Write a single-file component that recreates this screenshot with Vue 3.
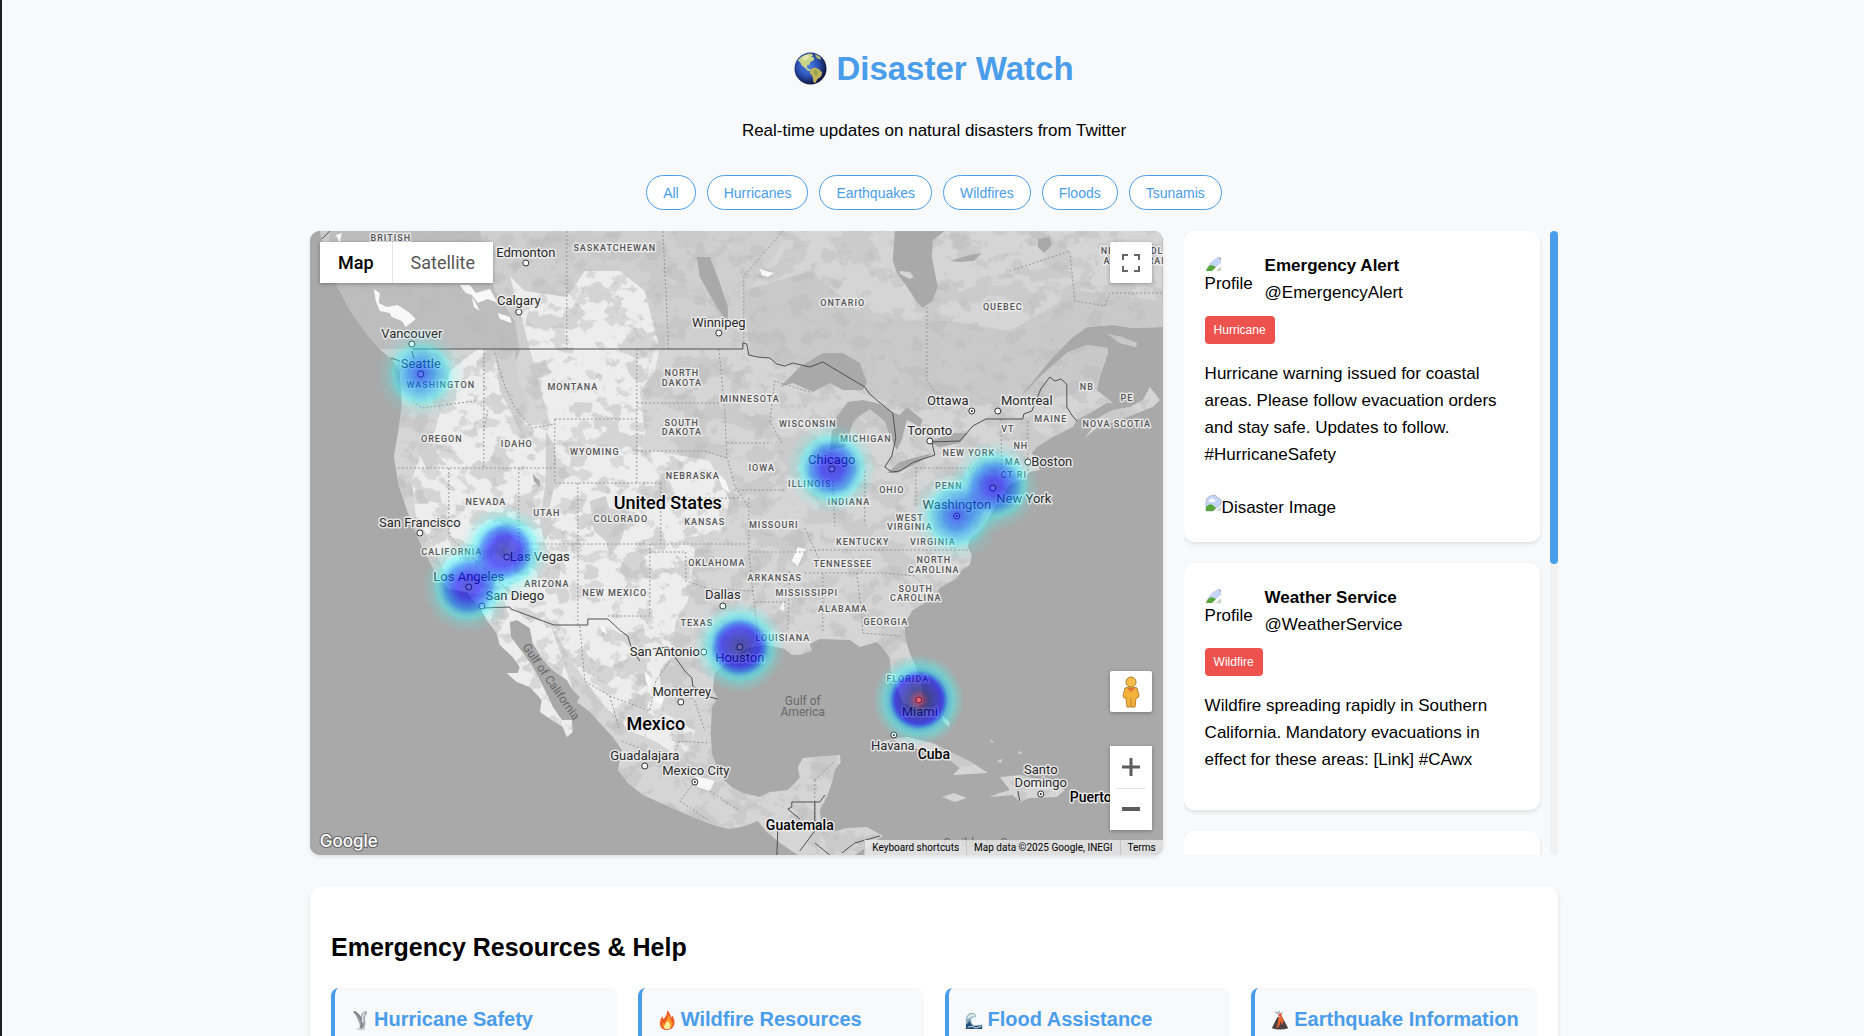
<script setup>
const filters = ['All', 'Hurricanes', 'Earthquakes', 'Wildfires', 'Floods', 'Tsunamis']

const tweets = [
  {
    name: 'Emergency Alert',
    handle: '@EmergencyAlert',
    type: 'Hurricane',
    text: 'Hurricane warning issued for coastal areas. Please follow evacuation orders and stay safe. Updates to follow. #HurricaneSafety',
    image: true
  },
  {
    name: 'Weather Service',
    handle: '@WeatherService',
    type: 'Wildfire',
    text: 'Wildfire spreading rapidly in Southern California. Mandatory evacuations in effect for these areas: [Link] #CAwx',
    image: false
  }
]

const resources = [
  { icon: 'tornado', title: 'Hurricane Safety' },
  { icon: 'fire', title: 'Wildfire Resources' },
  { icon: 'wave', title: 'Flood Assistance' },
  { icon: 'volcano', title: 'Earthquake Information' }
]

// Map labels: [text, x, baseline y]
const states = [
  ['BRITISH', 81, 10], ['SASKATCHEWAN', 305, 20], ['WASHINGTON', 131, 157], ['MONTANA', 263, 159],
  ['NORTH', 372, 145], ['DAKOTA', 372, 155], ['MINNESOTA', 440, 171], ['SOUTH', 372, 195], ['DAKOTA', 372, 204],
  ['OREGON', 132, 211], ['IDAHO', 207, 216], ['WYOMING', 285, 224], ['NEBRASKA', 383, 248], ['NEVADA', 176, 274],
  ['UTAH', 237, 285], ['COLORADO', 311, 291], ['KANSAS', 395, 294], ['ONTARIO', 533, 75], ['QUEBEC', 693, 79],
  ['NEWFOUNDLAND', 833, 23], ['AND LABRADOR', 833, 33], ['WISCONSIN', 498, 196], ['MICHIGAN', 556, 211],
  ['NB', 777, 159], ['PE', 817, 170], ['NOVA SCOTIA', 807, 196], ['MAINE', 741, 191], ['VT', 698, 201],
  ['NH', 711, 218], ['MA', 703, 234], ['CT RI', 704, 247], ['NEW YORK', 659, 225], ['PENN', 639, 258],
  ['OHIO', 582, 262], ['INDIANA', 539, 274], ['ILLINOIS', 500, 256], ['IOWA', 452, 240], ['WEST', 600, 290],
  ['VIRGINIA', 600, 299], ['MISSOURI', 464, 297], ['KENTUCKY', 553, 314], ['VIRGINIA', 623, 314],
  ['NORTH', 624, 332], ['CAROLINA', 624, 342], ['TENNESSEE', 533, 336], ['ARKANSAS', 465, 350],
  ['MISSISSIPPI', 497, 365], ['ALABAMA', 533, 381], ['SOUTH', 606, 361], ['CAROLINA', 606, 370],
  ['GEORGIA', 576, 394], ['LOUISIANA', 473, 410], ['FLORIDA', 598, 451], ['CALIFORNIA', 142, 324],
  ['ARIZONA', 237, 356], ['NEW MEXICO', 305, 365], ['OKLAHOMA', 407, 335], ['TEXAS', 387, 395]
]
const cities = [
  ['Edmonton', 216, 26], ['Calgary', 209, 74], ['Winnipeg', 409, 96], ['Vancouver', 102, 107], ['Seattle', 111, 137],
  ['San Francisco', 110, 296], ['Ottawa', 638, 174], ['Montreal', 717, 174], ['Toronto', 620, 204],
  ['Boston', 742, 235], ['Chicago', 522, 233], ['New York', 714, 272], ['Washington', 647, 278],
  ['Houston', 430, 431], ['Miami', 610, 485], ['Havana', 583, 519], ['Santo', 731, 543], ['Domingo', 731, 556],
  ['Las Vegas', 230, 330], ['Los Angeles', 159, 350], ['San Diego', 205, 369], ['Dallas', 413, 368],
  ['San Antonio', 355, 425], ['Monterrey', 372, 465], ['Guadalajara', 335, 529], ['Mexico City', 386, 544]
]
const dots = [
  [216, 32], [209, 81], [409, 102], [102, 113], [111, 143], [110, 302], [688, 180], [620, 210], [718, 231],
  [522, 238], [683, 257], [430, 416], [609, 469], [197, 326], [159, 356], [172, 375], [413, 375], [394, 421],
  [371, 471], [335, 535]
]
const capitals = [[662, 180], [647, 285], [584, 504], [731, 563], [385, 551]]

// Heat points: x, y, weight
const heat = [
  [111, 143, 0.36], [195, 320, 0.64], [158, 356, 0.56], [522, 237, 0.54], [685, 255, 0.5],
  [647, 285, 0.38], [430, 416, 0.76], [609, 469, 1]
]
</script>

<template>
  <div class="page">
    <main class="container">
      <header class="header">
        <h1>
          <svg class="globe" viewBox="0 0 34 34" aria-hidden="true">
            <defs>
              <radialGradient id="sea" cx=".42" cy=".42" r=".6">
                <stop offset="0" stop-color="#4f86e8" />
                <stop offset=".55" stop-color="#2b50b4" />
                <stop offset="1" stop-color="#0d1233" />
              </radialGradient>
            </defs>
            <circle cx="17" cy="17" r="16.500" fill="url(#sea)" />
            <path d="M4 9C7 4 12 2 17 1.500L20 3l-2 2 3 1-1 3-3 1-1 3-3 1 1 3 3 1 2 1-1 1-4-1-3-3-3-2-2-4Z" fill="#c9d68a" />
            <path d="M9 5l5-2 2 2-3 3-4 1Z" fill="#e6e6b0" />
            <path d="M22 2l5 3 1 3-4-1-2-3Z" fill="#a5b57b" />
            <path d="M18 17l4-1 4 2 3 3-1 4-4 3-2 4-2-1-1-6-3-4Z" fill="#c3b35c" />
            <path d="M21 18l4 2-2 5-3-4Z" fill="#93a34c" />
          </svg>
          <span>Disaster Watch</span>
        </h1>
        <p>Real-time updates on natural disasters from Twitter</p>
        <nav class="filters">
          <button v-for="f in filters" :key="f" type="button">{{ f }}</button>
        </nav>
      </header>

      <div class="content">
        <section class="map">
          <svg class="canvas" viewBox="0 0 853 624" preserveAspectRatio="xMidYMid slice">
            <defs>
              <filter id="patchMid" x="0" y="0" width="100%" height="100%" color-interpolation-filters="sRGB">
                <feTurbulence type="fractalNoise" baseFrequency=".03 .04" numOctaves="4" seed="7" />
                <feColorMatrix values="0 0 0 0 .78  0 0 0 0 .78  0 0 0 0 .78  20 0 0 0 -10.800" />
              </filter>
              <filter id="patchWest" x="0" y="0" width="100%" height="100%" color-interpolation-filters="sRGB">
                <feTurbulence type="fractalNoise" baseFrequency=".035 .04" numOctaves="4" seed="11" />
                <feColorMatrix values="0 0 0 0 .83  0 0 0 0 .83  0 0 0 0 .83  20 0 0 0 -11.200" />
              </filter>
              <filter id="patchDark" x="0" y="0" width="100%" height="100%" color-interpolation-filters="sRGB">
                <feTurbulence type="fractalNoise" baseFrequency=".05 .06" numOctaves="4" seed="21" />
                <feColorMatrix values="0 0 0 0 .73  0 0 0 0 .73  0 0 0 0 .73  16 0 0 0 -9.200" />
              </filter>
              <filter id="heatRamp" x="0" y="0" width="853" height="624" filterUnits="userSpaceOnUse" color-interpolation-filters="sRGB">
                <feColorMatrix values="0 0 0 1 0  0 0 0 1 0  0 0 0 1 0  0 0 0 1 0" />
                <feComponentTransfer>
                  <feFuncR type="table" tableValues=".3 .2 .1 0 0 0 0 0 0 0 .25 .5 .75 1" />
                  <feFuncG type="table" tableValues="1 1 .8 .5 .25 0 0 0 0 0 0 0 0 0" />
                  <feFuncB type="table" tableValues="1 1 1 1 1 1 .87 .75 .62 .5 .36 .25 .12 0" />
                  <feFuncA type="table" tableValues="0 .7 .8 .95 1 1 1 1 1 1 1 1 1 1" />
                </feComponentTransfer>
              </filter>
              <radialGradient id="spot">
                <stop offset="0" stop-color="#fff" stop-opacity="1" />
                <stop offset=".1" stop-color="#fff" stop-opacity=".82" />
                <stop offset=".3" stop-color="#fff" stop-opacity=".62" />
                <stop offset=".5" stop-color="#fff" stop-opacity=".4" />
                <stop offset=".64" stop-color="#fff" stop-opacity=".16" />
                <stop offset=".76" stop-color="#fff" stop-opacity=".07" />
                <stop offset="1" stop-color="#fff" stop-opacity="0" />
              </radialGradient>
              <clipPath id="land">
                <path d="M10 0L16 24L26 52L40 79L57 103L72 120L82 128L90 140L92 175L88 203L84 226L89 255L97 279L104 296L108 307L115 322L127 344L139 358L157 361L170 376L177 389L187 402L190 414L203 426L210 436L208 442L197 442L207 451L220 456L232 469L230 481L253 496L257 506L263 501L262 489L252 489L243 476L235 459L223 436L213 422L201 406L200 391L207 389L220 397L223 412L233 429L243 439L257 449L263 459L270 466L267 471L280 481L290 492L303 506L312 519L308 539L318 552L333 564L360 576L383 586L403 594L420 598L435 595L448 590L457 601L470 612L488 624H545L573 605L557 596L537 597L523 601L512 598L510 579L517 566L522 552L525 539L531 531L530 524L517 525L493 527L488 536L490 547L478 559L460 561L450 566L433 562L423 557L414 549L407 536L402 522L401 502L402 476L408 467L403 459L405 442L420 429L437 417L457 414L475 418L482 424L490 424L502 420L500 413L510 408L540 409L550 416L567 411L573 417L580 427L581 439L587 456L593 472L607 477L613 472L612 456L607 439L600 422L595 406L595 392L603 379L623 367L630 357L647 347L652 339L660 334L662 324L658 316L660 309L673 296L680 285L690 268L700 253L713 248L720 241L730 239L728 232L722 222L727 216L743 206L763 196L767 189L780 182L797 172L803 172L787 159L790 146L798 122L798 117L777 114L757 122L730 146L718 159L710 166L730 142L743 126L763 106L777 96L803 94L823 97L853 96V0ZM775 207L787 197L810 189L843 176L850 169L840 156L833 169L820 176L803 179L790 186ZM560 516L577 509L597 506L623 512L643 522L663 532L678 542L643 544L650 537L640 529L610 519L583 509ZM690 546L710 544L743 552L755 559L747 566L720 567L710 571L703 564L680 566L690 562L700 559ZM632 566L644 562L657 567L645 571ZM632 484L640 491L639 496L633 490ZM687 530L693 528L691 532ZM708 520L713 522L709 523ZM680 508L684 511L682 512ZM798 103L812 106L827 112L826 116L810 112Z" />
              </clipPath>
              <clipPath id="highlands">
                <path d="M200 45L215 60L257 66L275 40L310 40L335 60L350 118L345 140L330 160L335 200L335 218L400 230L420 270L412 300L385 320L378 370L366 390L362 425L350 440L352 480L385 500L375 530L345 510L320 500L290 470L262 430L240 392L262 455L262 510L200 452L170 380L140 352L120 310L106 285L102 250L108 230L125 200L135 165L140 140L168 118H190L205 170L220 195L240 192L220 118L210 80Z" />
              </clipPath>
            </defs>
            <rect width="853" height="624" fill="#a9a9a9" />
            <g clip-path="url(#land)">
              <rect width="853" height="624" fill="#d5d5d5" />
              <path d="M0 0H480L440 60L433 118H103L60 140L0 90Z" fill="#cfcfcf" />
              <path d="M433 60L500 40L560 90L640 90L700 100L770 60L853 70V150L720 170L600 180L440 120Z" fill="#c9c9c9" />
              <rect width="853" height="624" filter="url(#patchMid)" opacity=".75" />
              <path d="M20 0H170L185 60L205 90L210 120L190 170L175 175L168 118H60L20 80Z" fill="#bdbdbd" />
              <g clip-path="url(#highlands)">
                <rect width="853" height="624" fill="#ededed" />
                <rect width="853" height="624" filter="url(#patchWest)" />
              </g>
              <path d="M108 140L114 150L120 180L116 200L128 225L118 240L108 220L104 180ZM185 120L205 120L208 150L220 175L214 195L225 205L210 200L198 175L190 160ZM236 200L245 215L247 245L240 275L243 300L234 310L230 290L236 250ZM280 270L296 265L300 280L320 285L310 312L300 325L296 310L284 300Z" fill="#d0d0d0" />
              <rect width="853" height="624" filter="url(#patchDark)" opacity=".4" />
              <path d="M64 58L70 62L69 72L77 76L88 74L100 82L106 88L96 96L92 90L82 86L80 82L70 80L66 70ZM150 54L160 54L166 62L180 58L188 72L178 68L168 72L162 64L156 62ZM188 82L200 86L202 92L190 88ZM162 66L166 72L170 80L164 76ZM26 4L32 2L30 12L28 8ZM450 38L456 40L464 42L458 46L452 44ZM335 440L342 448L340 458L336 450ZM345 465L356 462L352 474L345 470ZM290 394L295 396L297 403L292 400ZM385 545L405 550L400 560L388 556ZM488 316L496 318L488 335L482 330ZM470 378L474 370L474 380ZM408 242L416 250L420 262L412 256Z" fill="#f8f8f8" />
              <path d="M585 0H635L623 9L622 26L628 56L623 69L613 77L607 71L598 57L587 42L583 29ZM470 156L490 136L513 122L533 122L550 132L557 152L553 159L533 159L520 152L503 161L483 152ZM520 219L522 202L527 186L538 171L553 169L570 173L582 181L590 184L597 176L613 189L610 196L597 189L592 209L587 219L580 205L575 190L560 178L548 186L543 192L540 202L535 216ZM577 242L590 231L607 226L623 222L610 231L587 242ZM618 211L643 202L658 202L650 212L630 216ZM387 26L400 26L410 52L418 76L418 92L407 76L390 46ZM223 243L230 250L230 256L224 250ZM640 30L660 24L672 22L664 30L650 31ZM728 8L740 6L742 14L734 22L728 16Z" fill="#a9a9a9" />
              <path d="M590 40L600 41L604 46L600 48L590 43Z" fill="#d5d5d5" />
            </g>
            <g class="state-lines">
              <path d="M257 0V118M353 0L359 118M473 0L434 45V118M617 76V150L625 160L660 180M174 118V237M88 237H245M245 188V252H351M245 188H327M327 118V252M327 172H415M327 220H395L417 227M139 237V305L205 365M209 237V313M268 252V394M209 313H438M351 252V313M351 267H430M340 313V385H298M340 321H376V350L400 358L445 360M185 122L195 155L204 175L222 197L245 193M103 170L112 177L165 170L178 180L174 200M409 118L415 180L417 225L425 255L438 275M417 212H462M424 259H476M439 267V321L443 360L448 400M441 321H495M446 371H477M500 319H658M495 342H575L605 345L620 360M513 342V400M547 342L552 385L553 402L590 405M523 250L525 295M555 240V290M606 236V275M606 237H668M691 188L692 240M718 190V240M480 340L478 400M500 161L465 150L460 190L472 212M495 297L510 330M700 40L760 20L765 70L795 75L800 62H853M270 395L275 450L300 465L340 480L346 450L360 430M312 510L360 530L370 510L400 512M300 465L310 500M365 455L385 470L395 500M385 551L370 570L400 590M400 560L430 580M505 549L525 530M505 549V600" />
            </g>
            <g class="borders">
              <path d="M103 118H433V112L437 113L439 124L448 126L460 127L467 133L475 135L483 132L500 136L513 131L555 156L560 163L568 170L583 182L586 207L582 225L575 236L582 241L590 240L604 231L625 224L622 211L650 210L663 195L676 188H713L714 183L722 180L731 158L740 146L745 150L751 148L757 153V176L762 184L767 190" />
              <path d="M172 377L200 376L201 378L244 394H278V388H298L311 400L318 405L322 418L330 430M343 418L358 416L368 430L375 440L382 447L383 455L400 466L408 468M81 127L90 130M102 120L104 127M515 564L510 571H482V576L478 578L490 588M505 571V600L490 620M505 612L520 624M468 600L467 624M532 622L545 612L570 605M708 560L710 570" />
              <path d="M20 0L12 8" />
            </g>
            <g>
              <circle v-for="(d, i) in dots" :key="i" :cx="d[0]" :cy="d[1]" r="3" class="dot" />
              <g v-for="(d, i) in capitals" :key="'c' + i">
                <circle :cx="d[0]" :cy="d[1]" r="3" class="dot" />
                <circle :cx="d[0]" :cy="d[1]" r="1" fill="#222" />
              </g>
            </g>
            <text v-for="(s, i) in states" :key="'s' + i" class="label state" :x="s[1]" :y="s[2]">{{ s[0] }}</text>
            <text v-for="(c, i) in cities" :key="'t' + i" class="label city" :x="c[1]" :y="c[2]">{{ c[0] }}</text>
            <text class="label country big" x="358" y="278">United States</text>
            <text class="label country big" x="346" y="499">Mexico</text>
            <text class="label country" x="490" y="599">Guatemala</text>
            <text class="label country" x="624" y="528">Cuba</text>
            <text class="label country" x="781" y="571">Puerto</text>
            <text class="water" x="493" y="474">Gulf of</text>
            <text class="water" x="493" y="485">America</text>
            <text class="water" x="672" y="616">Caribbean Sea</text>
            <text class="water" transform="translate(238 453) rotate(55)">Gulf of California</text>
            <g opacity=".6">
              <g filter="url(#heatRamp)">
                <circle v-for="(h, i) in heat" :key="'h' + i" :cx="h[0]" :cy="h[1]" r="46" fill="url(#spot)" :opacity="h[2]" />
              </g>
            </g>
            <text class="google" x="10" y="616">Google</text>
          </svg>

          <div class="map-type">
            <button type="button" class="active">Map</button>
            <button type="button">Satellite</button>
          </div>
          <button type="button" class="ctrl fullscreen" aria-label="Toggle fullscreen view">
            <svg width="20" height="20" viewBox="0 0 20 20" fill="none" stroke="#666" stroke-width="2">
              <path d="M7 2H2V7M13 2H18V7M7 18H2V13M13 18H18V13" />
            </svg>
          </button>
          <div class="corner">
            <button type="button" class="ctrl" aria-label="Street View">
              <svg width="20" height="32" viewBox="0 0 20 32">
                <path d="M4 12Q10 9 16 12L18 20Q18 22 15 22L14 31H6L5 22Q2 22 2 20Z" fill="#f3b13c" stroke="#b98328" />
                <path d="M6 12L10 16L14 12Z" fill="#e2703a" />
                <path d="M10 22V31" stroke="#b98328" />
                <circle cx="10" cy="6" r="5" fill="#f7bc45" stroke="#a08040" />
              </svg>
            </button>
            <div class="zoom">
              <button type="button" class="ctrl" aria-label="Zoom in">
                <svg width="18" height="18" viewBox="0 0 18 18" stroke="#5c5c5c" stroke-width="3"><path d="M0 9H18M9 0V18" /></svg>
              </button>
              <button type="button" class="ctrl" aria-label="Zoom out">
                <svg width="18" height="18" viewBox="0 0 18 18" stroke="#5c5c5c" stroke-width="4"><path d="M0 9H18" /></svg>
              </button>
            </div>
          </div>
          <div class="attribution">
            <button type="button">Keyboard shortcuts</button>
            <span>Map data ©2025 Google, INEGI</span>
            <a href="#terms">Terms</a>
          </div>
        </section>

        <aside class="feed">
          <div class="tweets">
            <article v-for="t in tweets" :key="t.handle" class="tweet">
              <div class="author">
                <div class="avatar">
                  <svg width="17" height="15" viewBox="0 0 17 15" aria-hidden="true">
                    <path d="M1 14Q3 5 13 0L16 1V6L6 14Z" fill="#c5d5f5" />
                    <path d="M1 14Q4 6 9 9L11 10L7 14Z" fill="#57a639" />
                    <path d="M11 14L16 9V14Z" fill="#c5d5c0" />
                    <path d="M13 0L16 1V3Z" fill="#999" />
                  </svg>
                  <span>Profile</span>
                </div>
                <div>
                  <strong>{{ t.name }}</strong>
                  <div>{{ t.handle }}</div>
                </div>
              </div>
              <span class="badge">{{ t.type }}</span>
              <p>{{ t.text }}</p>
              <div v-if="t.image" class="picture">
                <svg width="17" height="18" viewBox="0 0 17 18" aria-hidden="true">
                  <path d="M1 17V8Q2 1 10 1L16 6V10L8 17Z" fill="#c3d4f7" stroke="#b5bcc8" />
                  <path d="M5 6Q6 3 8 5Q11 5 10 8H4Q3 6 5 6Z" fill="#fff" />
                  <path d="M1 17V13Q5 8 9 12L11 14L8 17Z" fill="#57a639" />
                  <path d="M11 17L16 12V17Z" fill="#cfd8cc" />
                </svg>
                <span>Disaster Image</span>
              </div>
            </article>
            <article class="tweet"></article>
          </div>
          <div class="track"><div class="thumb"></div></div>
        </aside>
      </div>

      <section class="resources">
        <h2>Emergency Resources &amp; Help</h2>
        <div class="cards">
          <article v-for="r in resources" :key="r.icon" class="card">
            <h3>
              <svg v-if="r.icon === 'tornado'" viewBox="0 0 18 22" aria-hidden="true">
                <path d="M1 2Q4 0 7 4Q8 6 10 7Q10 2 16 1Q18 3 15 6Q14 10 15 14Q15 18 13 21H8Q10 16 7 12Q5 6 1 2Z" fill="#a3a5ad" />
                <path d="M3 2Q8 5 10 10Q12 16 10 20" fill="none" stroke="#7b7d87" stroke-width="2" />
                <path d="M14 3Q11 7 12 14" fill="none" stroke="#dcdde2" stroke-width="2" />
                <ellipse cx="10" cy="21" rx="5" ry="1" fill="#c9cacf" />
              </svg>
              <svg v-else-if="r.icon === 'fire'" viewBox="0 0 18 22" aria-hidden="true">
                <path d="M9 0Q14 5 13 9L15 6Q18 12 17 16Q15 22 9 22Q2 22 1 15Q1 10 4 7L5 10Q10 6 9 0Z" fill="#ee5a24" />
                <path d="M10 5Q14 10 14 14L15 13Q16 20 9 21Q3 20 4 14L6 15Q10 11 10 5Z" fill="#fb9a2c" />
                <path d="M10 12Q14 17 12 20Q9 22 6 20Q5 17 10 12Z" fill="#fff0a0" />
              </svg>
              <svg v-else-if="r.icon === 'wave'" viewBox="0 0 20 22" aria-hidden="true">
                <path d="M1 20V9Q3 3 8 3Q13 4 12 8Q9 7 7 10Q6 14 10 17L19 16V21H1Z" fill="#8fb0c2" />
                <path d="M2 10Q4 4 8 4Q12 5 11 7Q8 6 5 9Z" fill="#dfe9e4" />
                <path d="M1 16Q5 14 5 10Q5 16 10 18L19 17V21H1Z" fill="#234f78" />
                <path d="M7 9L9 11L11 8L12 11M3 19L8 18L12 20L18 18" fill="none" stroke="#dfe9ea" />
              </svg>
              <svg v-else viewBox="0 0 18 22" aria-hidden="true">
                <path d="M6 8L11 7L18 20Q9 23 0 20Z" fill="#4b4140" />
                <path d="M7 8L11 7L13 12L11 17L10 12L8 18L5 20L7 13Z" fill="#f0642d" />
                <path d="M9 7L5 4L2 2L7 2L9 0L9 4L13 1L11 5Z" fill="#b9bbbf" />
                <path d="M8 5L10 3L11 7H7Z" fill="#ee4b2b" />
              </svg>
              <span>{{ r.title }}</span>
            </h3>
          </article>
        </div>
      </section>
    </main>
  </div>
</template>

<style>
body {
  background: #f7f9fb;
}
</style>

<style scoped>
* {
  box-sizing: border-box;
}
.page {
  height: 100vh;
  padding-left: 2px;
  overflow-y: auto;
  scrollbar-width: none;
  border-left: 2px solid #1d1e22;
  background: #f7f9fb;
  color: #000;
  font: 17px/27px "Liberation Sans", Arial, sans-serif;
}
button {
  font: inherit;
  cursor: pointer;
}
.container {
  max-width: 1248px;
  margin: 0 auto;
  padding: 42px 0 21px;
}
.header {
  text-align: center;
}
h1 {
  display: flex;
  align-items: center;
  justify-content: center;
  gap: 9px;
  margin: 0 0 22px;
  color: #4a9dea;
  font-size: 33px;
  line-height: 53px;
}
.globe {
  width: 33px;
  height: 33px;
}
.header p {
  margin: 0 0 31px;
}
.filters {
  display: flex;
  flex-wrap: wrap;
  justify-content: center;
  gap: 11px;
  margin-bottom: 21px;
}
.filters button {
  height: 35px;
  padding: 0 16px;
  border: 1px solid #4a9dea;
  border-radius: 21px;
  background: #fff;
  color: #4a9dea;
  font-size: 14px;
  line-height: 16px;
}
.content {
  display: flex;
  gap: 21px;
  height: 624px;
}
.map {
  position: relative;
  flex: 1;
  min-width: 0;
  overflow: hidden;
  border-radius: 10px;
  background: #a9a9a9;
  box-shadow: 0 2px 4px rgba(0, 0, 0, 0.1);
  font-family: Roboto, sans-serif;
}
.canvas {
  display: block;
  width: 100%;
  height: 100%;
}
.state-lines {
  fill: none;
  stroke: #979797;
  stroke-dasharray: 2 2;
}
.borders {
  fill: none;
  stroke: #505050;
}
.dot {
  fill: #fff;
  stroke: #333;
}
.label {
  text-anchor: middle;
  paint-order: stroke;
  stroke: rgba(240, 240, 240, 0.85);
  stroke-width: 3px;
  stroke-linejoin: round;
}
.state {
  fill: #555;
  font-size: 9px;
  font-weight: 500;
  letter-spacing: 1px;
}
.city {
  fill: #2a2a2a;
  font-size: 13px;
}
.country {
  fill: #000;
  font-size: 14px;
  font-weight: 500;
}
.big {
  font-size: 18px;
}
.water {
  fill: #686868;
  font-size: 12px;
  text-anchor: middle;
}
.google {
  fill: #fff;
  font: 500 17px Inter, sans-serif;
  paint-order: stroke;
  stroke: #666;
  stroke-width: 2px;
}
.map-type {
  position: absolute;
  top: 11px;
  left: 10px;
  display: flex;
  height: 41px;
  background: #fff;
  box-shadow: 0 1px 4px rgba(0, 0, 0, 0.3);
}
.map-type button {
  padding: 0 18px;
  border: 0;
  background: none;
  color: #565656;
  font-size: 18px;
}
.map-type .active {
  border-right: 1px solid #e6e6e6;
  color: #000;
  font-weight: 500;
}
.ctrl {
  display: flex;
  align-items: center;
  justify-content: center;
  width: 42px;
  height: 41px;
  padding: 0;
  border: 0;
  border-radius: 2px;
  background: #fff;
  box-shadow: 0 1px 4px rgba(0, 0, 0, 0.3);
}
.fullscreen {
  position: absolute;
  top: 11px;
  right: 11px;
}
.corner {
  position: absolute;
  right: 11px;
  bottom: 25px;
  display: flex;
  flex-direction: column;
  gap: 34px;
}
.zoom {
  background: #fff;
  box-shadow: 0 1px 4px rgba(0, 0, 0, 0.3);
}
.zoom .ctrl {
  height: 42px;
  box-shadow: none;
}
.zoom .ctrl + .ctrl {
  background: linear-gradient(#e6e6e6, #e6e6e6) center top / 31px 1px no-repeat #fff;
}
.attribution {
  position: absolute;
  right: 0;
  bottom: 0;
  display: flex;
  height: 15px;
  color: #000;
  font-size: 10px;
  line-height: 15px;
}
.attribution > * {
  padding: 0 7px;
  border: 0;
  border-left: 1px solid #c4c4c4;
  background: rgba(236, 236, 236, 0.8);
  color: inherit;
  text-decoration: none;
}
.feed {
  display: flex;
  gap: 10px;
  width: 30%;
}
.tweets {
  flex: 1;
  min-width: 0;
  margin-right: -10px;
  padding-right: 10px;
  overflow: hidden;
}
.tweet {
  min-height: 160px;
  margin-bottom: 21px;
  padding: 21px;
  border-radius: 10px;
  background: #fff;
  box-shadow: 0 2px 4px rgba(0, 0, 0, 0.1);
}
.author {
  display: flex;
  align-items: center;
  gap: 10px;
  margin-bottom: 10px;
}
.author strong {
  display: block;
}
.avatar {
  display: flex;
  flex-direction: column;
  width: 50px;
  height: 50px;
  padding-top: 3px;
}
.avatar span {
  line-height: 24px;
}
.badge {
  display: block;
  width: fit-content;
  height: 28px;
  padding: 0 9px;
  border-radius: 4px;
  background: #ee524e;
  color: #fff;
  font-size: 12px;
  line-height: 28px;
}
.tweet p {
  margin: 16px 0;
}
.picture {
  display: flex;
  margin-top: 26px;
}
.track {
  width: 8px;
  border-radius: 4px;
  background: #f1f1f1;
}
.thumb {
  height: 333px;
  border-radius: 4px;
  background: #4a9dea;
}
.resources {
  margin-top: 31px;
  padding: 41px 21px 21px;
  border-radius: 12px;
  background: #fff;
  box-shadow: 0 2px 4px rgba(0, 0, 0, 0.1);
}
h2 {
  margin: 0 0 21px;
  font-size: 25px;
  line-height: 40px;
}
.cards {
  display: grid;
  grid-template-columns: repeat(4, 1fr);
  gap: 21px;
}
.card {
  min-height: 160px;
  padding: 16px;
  border-left: 4px solid #4a9dea;
  border-radius: 8px;
  background: #f7f9fb;
}
h3 {
  display: flex;
  align-items: center;
  gap: 5px;
  margin: 0;
  color: #4a9dea;
  font-size: 20px;
  line-height: 31px;
  white-space: nowrap;
}
h3 svg {
  width: 18px;
  height: 20px;
}
</style>
